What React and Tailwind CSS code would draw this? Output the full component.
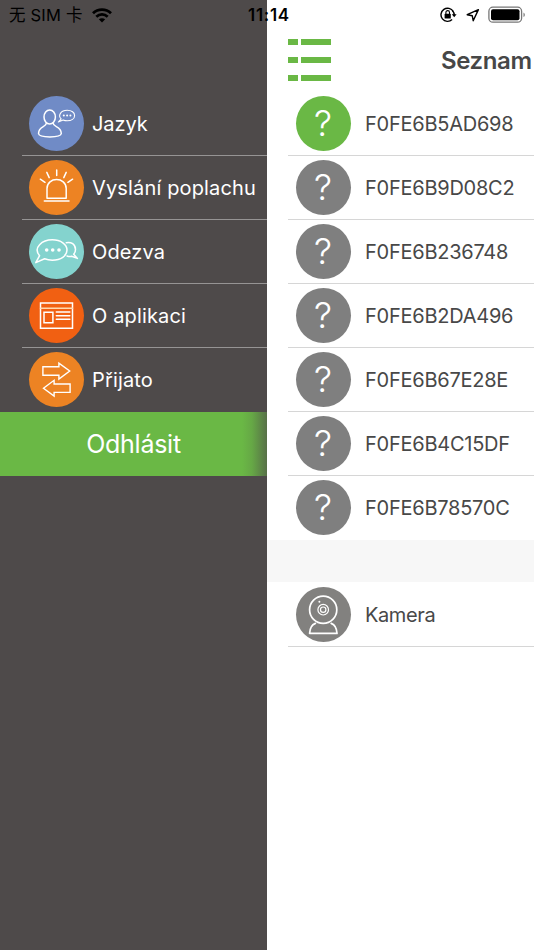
import React from "react";

const stroke = {
  fill: "none",
  stroke: "#fff",
  strokeWidth: 1.5,
  strokeLinejoin: "round",
  strokeLinecap: "round",
};

function LanguageIcon() {
  return (
    <g {...stroke}>
      <ellipse cx="20.7" cy="21" rx="5.7" ry="7.1" />
      <path d="M17.3 27.2C17.3 31.3 9.5 30 9.5 37.5C10 42 31.8 42 32.3 37.5C32.3 30 24.2 31.3 24.2 27.2" />
      <path strokeWidth="1.1" d="M29.3 26L32.2 22.8C28.6 19.6 31.8 14.3 38.2 14.3C42.6 14.3 45.6 16.6 45.6 19.4C45.6 22.6 42.4 24.7 38.2 24.7C36.5 24.7 35.3 24.4 34.1 23.9Z" />
      <g fill="#fff" stroke="none">
        <circle cx="34.8" cy="19.4" r="1" />
        <circle cx="38.1" cy="19.4" r="1" />
        <circle cx="41.4" cy="19.4" r="1" />
      </g>
    </g>
  );
}

function AlarmIcon() {
  return (
    <g {...stroke}>
      <path d="M18 38.2V28.5C18 16.6 37.2 16.6 37.2 28.5V38.2Z" />
      <path d="M15.3 41H40" />
      <path d="M27.7 10V15.6M17.8 12.4L20.2 17.6M37.2 12.4L34.8 17.6M11.3 19.2L16 22.3M43.6 19.2L38.9 22.3" />
    </g>
  );
}

function FeedbackIcon() {
  return (
    <g {...stroke}>
      <path d="M6.8 38.6L10.6 31.7C3.5 23.5 13.5 15.8 23.3 15.8C31.8 15.8 38 20.3 38 26C38 31.8 31.8 36.2 23.3 36.2C20.2 36.2 17.8 35.7 15.6 34.8Z" />
      <path d="M37.3 18.7C42 17.5 46.5 20.4 46.5 25.4C46.5 27.5 45.8 29 44.7 30.2L48.4 34.4L42.6 32.3C40.8 33 39.6 32.6 38 32" />
      <g fill="#fff" stroke="none">
        <circle cx="17.7" cy="26" r="1.8" />
        <circle cx="23.7" cy="26" r="1.8" />
        <circle cx="30" cy="26" r="1.8" />
      </g>
    </g>
  );
}

function AboutIcon() {
  return (
    <g {...stroke} strokeLinejoin="miter">
      <path d="M11.5 15H43.5V40.3H11.5Z" />
      <path d="M11.5 20.3H43.5" stroke="#ffd9b0" />
      <path d="M15 24.3H23.9V34.7H15Z" />
      <path d="M27.3 24H40.8M27.3 27.7H40.8M27.3 31.3H40.8" />
    </g>
  );
}

function ReceivedIcon() {
  return (
    <g {...stroke} strokeWidth="1.4" strokeLinejoin="miter">
      <path d="M13.9 14.7H29.9V11.1L40.7 19L29.9 27V23.3H13.9Z" />
      <path d="M41.1 32H25.1V28.3L14.5 36.3L25.1 44.1V40.4H41.1Z" />
    </g>
  );
}

function CameraIcon() {
  return (
    <g {...stroke}>
      <circle cx="27.2" cy="22.7" r="13.6" strokeWidth="1.7" />
      <circle cx="27.2" cy="22.7" r="5.3" strokeWidth="1.2" />
      <circle cx="27.2" cy="22.7" r="2.7" strokeWidth="1.2" />
      <circle cx="23.4" cy="14.8" r="1" fill="#fff" stroke="none" />
      <path strokeWidth="1.7" d="M19.4 36.4C15.6 38 13.8 41.3 13.6 46.4H41C40.8 41.3 39 38 35.2 36.4" />
    </g>
  );
}

const menu = [
  { label: "Jazyk", color: "bg-[#708bc6]", Icon: LanguageIcon, spacing: "tracking-[-0.1px]" },
  { label: "Vyslání poplachu", color: "bg-[#ed8323]", Icon: AlarmIcon, spacing: "tracking-[0.15px]" },
  { label: "Odezva", color: "bg-[#84d3ce]", Icon: FeedbackIcon, spacing: "tracking-[0.15px]" },
  { label: "O aplikaci", color: "bg-[#f16012]", Icon: AboutIcon, spacing: "tracking-[0.15px]" },
  { label: "Přijato", color: "bg-[#ed8323]", Icon: ReceivedIcon, spacing: "tracking-[0.15px]" },
];

const devices = [
  "F0FE6B5AD698",
  "F0FE6B9D08C2",
  "F0FE6B236748",
  "F0FE6B2DA496",
  "F0FE6B67E28E",
  "F0FE6B4C15DF",
  "F0FE6B78570C",
];

function StatusBar() {
  return (
    <div className="absolute inset-x-0 top-0 z-10 flex h-[30px] items-center text-black">
      <div className="flex w-[248px] items-center pl-[9px]">
        <span className="w-[83px] whitespace-nowrap text-[16.5px] leading-[30px] tracking-[0.2px]">无 SIM 卡</span>
        <svg width="20" height="15" viewBox="0 0 20 15" fill="none" stroke="#000" strokeWidth="2.8">
          <path d="M1 5.3C6 .4 14 .4 19 5.3" />
          <path d="M4.3 8.7C7.6 5.7 12.4 5.7 15.7 8.7" />
          <path d="M6.8 11.3C8.7 9.8 11.3 9.8 13.2 11.3L10 14.5Z" fill="#000" stroke="none" />
        </svg>
      </div>
      <span className="w-[192px] text-[17px] font-semibold leading-[30px] tracking-[0.7px]">11:14</span>
      <svg width="94" height="20" viewBox="440 5 94 20" fill="none" stroke="#000">
        <path d="M453.3 11.5A6.6 6.6 0 1 0 452.1 19.6" strokeWidth="1.4" />
        <path d="M452.4 10.4A6.6 6.6 0 0 1 454.2 16" strokeWidth="1.4" />
        <path d="M451.8 14.2H456.6L454.2 17.2Z" fill="#000" stroke="none" />
        <rect x="444.6" y="13.8" width="6.2" height="4.8" rx=".6" fill="#000" stroke="none" />
        <path d="M445.9 14V12.4A1.8 1.8 0 0 1 449.5 12.4V14" strokeWidth="1.1" />
        <path d="M478.4 9.6L467.2 14.7L472.3 15.8L473.2 20.7Z" strokeWidth="1.4" strokeLinejoin="round" />
        <rect x="488.9" y="7.2" width="32.7" height="15" rx="4" stroke="#777" strokeWidth="1.3" />
        <rect x="491" y="9.2" width="28.5" height="11" rx="2" fill="#000" stroke="none" />
        <path d="M523.5 12.4C525.3 13.2 525.3 16.2 523.5 17Z" fill="#777" stroke="none" />
      </svg>
    </div>
  );
}

function Circle({ color, children }) {
  return (
    <span className={"block size-[55px] shrink-0 rounded-full " + color}>
      <svg width="55" height="55" viewBox="0 0 55 55">{children}</svg>
    </span>
  );
}

function DeviceRow({ color, label, border, spacing, children }) {
  return (
    <li className={"ml-[21px] flex h-16 items-center border-b pl-[7.5px] " + border}>
      <Circle color={color}>{children}</Circle>
      <span className={"ml-[14.5px] whitespace-nowrap text-[20px] text-[#484848] " + spacing}>{label}</span>
    </li>
  );
}

export default function App() {
  return (
    <div className="relative flex h-[950px] w-[534px] overflow-hidden bg-white font-['Inter','Noto_Sans_CJK_SC',sans-serif]">
      <StatusBar />
      <aside className="w-[267px] shrink-0 bg-[#4e4a4a] pt-[92px] text-white">
        <ul>
          {menu.map(({ label, color, Icon, spacing }, i) => (
            <li
              key={label}
              className={
                "ml-[22px] flex h-16 items-center border-b pl-[7px] " +
                (i < menu.length - 1 ? "border-[#969494]" : "border-transparent")
              }
            >
              <Circle color={color}>
                <Icon />
              </Circle>
              <span className={"ml-2 whitespace-nowrap text-[20px] " + spacing}>{label}</span>
            </li>
          ))}
        </ul>
        <button className="block h-16 w-full bg-[#6ab845] bg-[linear-gradient(to_right,transparent_242px,#4e4a4a26_252px,#4e4a4aa6_267px)] pt-px text-center text-[25px] tracking-[-0.25px]">
          Odhlásit
        </button>
      </aside>
      <main className="min-w-0 flex-1 bg-white">
        <header className="flex h-[92px] items-start pl-[21px] pt-[39px]">
          <div className="grid w-[43px] grid-cols-[10px_30px] gap-x-[3px] gap-y-3">
            {[0, 1, 2, 3, 4, 5].map((n) => (
              <span key={n} className="h-1.5 bg-[#6ab845]" />
            ))}
          </div>
          <h1 className="ml-[110px] mt-1.5 text-[24px] font-semibold leading-8 tracking-[-0.4px] text-[#474747]">Seznam</h1>
        </header>
        <ul>
          {devices.map((id, i) => (
            <DeviceRow
              key={id}
              label={id}
              spacing="tracking-[-0.25px]"
              color={i === 0 ? "bg-[#6ab845]" : "bg-[#7f7f7f]"}
              border={i < devices.length - 1 ? "border-[#d6d6d6]" : "border-transparent"}
            >
              <text x="27" y="40" textAnchor="middle" fill="#fff" fontSize="36" fontWeight="350">?</text>
            </DeviceRow>
          ))}
        </ul>
        <div className="mb-px h-[42px] bg-[#f7f7f7]" />
        <ul>
          <DeviceRow label="Kamera" color="bg-[#82817f]" border="border-[#d6d6d6]" spacing="tracking-[-0.4px]">
            <CameraIcon />
          </DeviceRow>
        </ul>
      </main>
    </div>
  );
}
